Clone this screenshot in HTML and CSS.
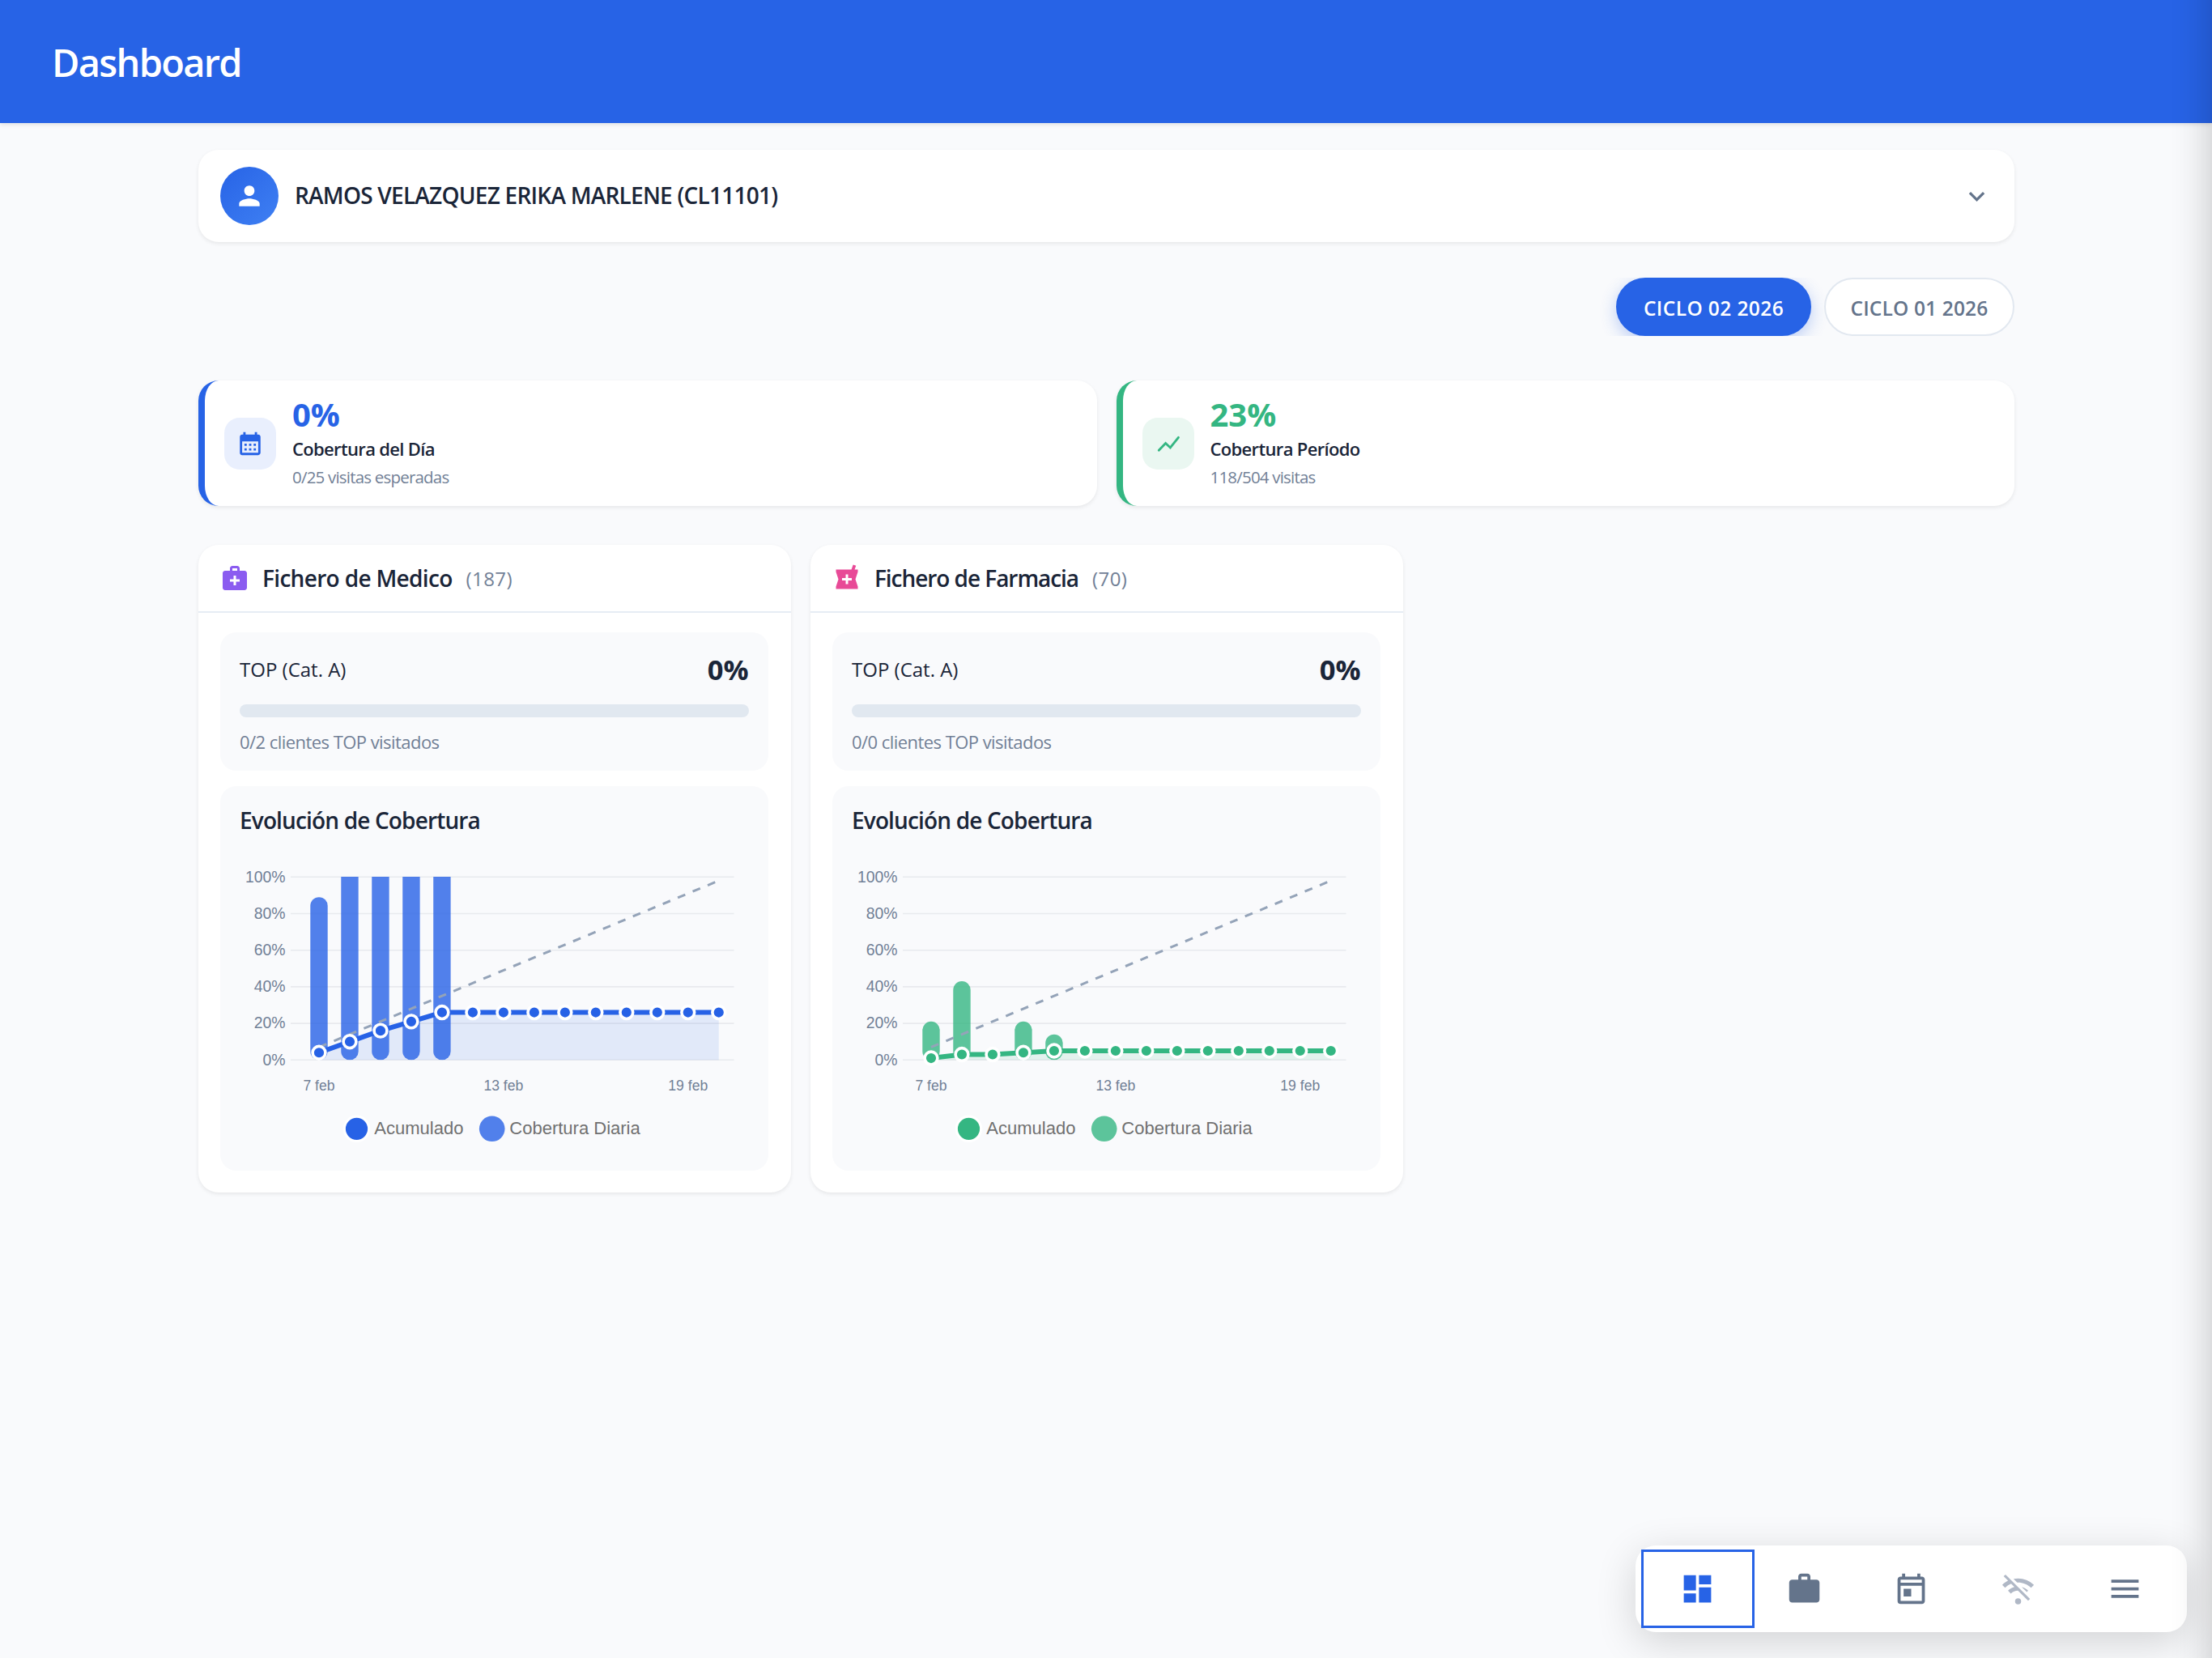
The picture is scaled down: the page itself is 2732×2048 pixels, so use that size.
FILE: index.html
```html
<!DOCTYPE html>
<html lang="es">
<head>
<meta charset="utf-8">
<title>Dashboard</title>
<link rel="stylesheet" href="styles.css">
</head>
<body>
<header class="topbar"><h1 class="topbar-title">Dashboard</h1></header>
<main class="content">
  <section class="profile">
    <div class="avatar"><svg viewBox="0 0 24 24" width="38" height="38" fill="#fff"><path d="M12 12c2.21 0 4-1.79 4-4s-1.79-4-4-4-4 1.79-4 4 1.79 4 4 4zm0 2c-2.67 0-8 1.34-8 4v2h16v-2c0-2.66-5.33-4-8-4z"/></svg></div>
    <span class="profile-name">RAMOS VELAZQUEZ ERIKA MARLENE (CL11101)</span>
    <svg class="chevron" viewBox="0 0 24 24" width="39" height="39"><path d="M16.59 8.59L12 13.17 7.41 8.59 6 10l6 6 6-6z"/></svg>
  </section>
  <nav class="cycles">
    <button class="pill pill-active">CICLO 02 2026</button>
    <button class="pill">CICLO 01 2026</button>
  </nav>
  <section class="stats">
    <article class="stat stat-blue">
      <div class="stat-icon"><svg viewBox="0 0 24 24" width="34" height="34"><path d="M19 4h-1V2h-2v2H8V2H6v2H5c-1.11 0-1.99.9-1.99 2L3 20a2 2 0 0 0 2 2h14c1.1 0 2-.9 2-2V6c0-1.1-.9-2-2-2zm0 16H5V10h14v10zM9 14H7v-2h2v2zm4 0h-2v-2h2v2zm4 0h-2v-2h2v2zm-8 4H7v-2h2v2zm4 0h-2v-2h2v2zm4 0h-2v-2h2v2z"/></svg></div>
      <div class="stat-text">
        <span class="stat-value">0%</span>
        <span class="stat-label">Cobertura del Día</span>
        <span class="stat-sub">0/25 visitas esperadas</span>
      </div>
    </article>
    <article class="stat stat-green">
      <div class="stat-icon"><svg viewBox="0 0 24 24" width="34" height="34"><path class="trend" d="M3.7 17.8L9.6 11.7 13.7 15.5 20.8 6.6"/></svg></div>
      <div class="stat-text">
        <span class="stat-value">23%</span>
        <span class="stat-label">Cobertura Período</span>
        <span class="stat-sub">118/504 visitas</span>
      </div>
    </article>
  </section>
  <section class="files">
    <article class="file file-medico">
      <header class="file-head">
        <svg viewBox="0 0 24 24" width="36" height="36"><path d="M20 6h-4V4c0-1.1-.9-2-2-2h-4c-1.1 0-2 .9-2 2v2H4c-1.1 0-2 .9-2 2v12c0 1.1.9 2 2 2h16c1.1 0 2-.9 2-2V8c0-1.1-.9-2-2-2zM10 4h4v2h-4V4zm6 11h-3v3h-2v-3H8v-2h3v-3h2v3h3v2z"/></svg>
        <h2 class="file-title">Fichero de Medico</h2><span class="file-count">(187)</span>
      </header>
      <div class="file-body">
        <div class="panel top-panel">
          <div class="top-row"><span class="top-label">TOP (Cat. A)</span><strong class="top-value">0%</strong></div>
          <div class="bar"></div>
          <span class="top-sub">0/2 clientes TOP visitados</span>
        </div>
        <div class="panel chart-panel">
          <h3 class="chart-title">Evolución de Cobertura</h3>
          <svg class="chart" id="chart-medico" viewBox="296 1040 628 380" width="628" height="380"></svg>
        </div>
      </div>
    </article>
    <article class="file file-farmacia">
      <header class="file-head">
        <svg viewBox="0 0 24 24" width="36" height="36"><path d="M21 5h-2.64l1.14-3.14L17.15 1l-1.46 4H3v2l2 6-2 6v2h18v-2l-2-6 2-6V5zm-5 9h-3v3h-2v-3H8v-2h3V9h2v3h3v2z"/></svg>
        <h2 class="file-title">Fichero de Farmacia</h2><span class="file-count">(70)</span>
      </header>
      <div class="file-body">
        <div class="panel top-panel">
          <div class="top-row"><span class="top-label">TOP (Cat. A)</span><strong class="top-value">0%</strong></div>
          <div class="bar"></div>
          <span class="top-sub">0/0 clientes TOP visitados</span>
        </div>
        <div class="panel chart-panel">
          <h3 class="chart-title">Evolución de Cobertura</h3>
          <svg class="chart" id="chart-farmacia" viewBox="296 1040 628 380" width="628" height="380"></svg>
        </div>
      </div>
    </article>
  </section>
</main>
<nav class="dock">
  <a class="dock-item dock-active"><svg viewBox="0 0 24 24" width="45" height="45"><path d="M3 13h8V3H3v10zm0 8h8v-6H3v6zm10 0h8V11h-8v10zm0-18v6h8V3h-8z"/></svg></a>
  <a class="dock-item"><svg viewBox="0 0 24 24" width="45" height="45"><path d="M20 6h-4V4c0-1.11-.89-2-2-2h-4c-1.11 0-2 .89-2 2v2H4c-1.11 0-1.99.89-1.99 2L2 19c0 1.11.89 2 2 2h16c1.11 0 2-.89 2-2V8c0-1.11-.89-2-2-2zm-6 0h-4V4h4v2z"/></svg></a>
  <a class="dock-item"><svg viewBox="0 0 24 24" width="45" height="45"><path d="M19 4h-1V2h-2v2H8V2H6v2H5c-1.11 0-1.99.9-1.99 2L3 20a2 2 0 0 0 2 2h14c1.1 0 2-.9 2-2V6c0-1.1-.9-2-2-2zm0 16H5V10h14v10zm0-12H5V6h14v2zM7 12h5v5H7z"/></svg></a>
  <a class="dock-item dock-disabled"><svg viewBox="0 0 24 24" width="45" height="45"><g transform="translate(.6 .9) scale(.95)"><path d="M22.99 9C19.15 5.16 13.8 3.76 8.84 4.78l2.52 2.52c3.47-.17 6.99 1.05 9.63 3.7l2-2zm-4 4c-1.29-1.29-2.84-2.13-4.49-2.56l3.53 3.53.96-.97zM2 3.05L5.07 6.1C3.6 6.82 2.22 7.78 1 9l1.99 2c1.24-1.24 2.67-2.16 4.2-2.77l2.24 2.24C7.81 10.89 6.27 11.73 5 13v.01L6.99 15c1.36-1.36 3.14-2.04 4.92-2.06L18.98 20l1.27-1.26L3.29 1.79 2 3.05z"/></g><circle cx="12" cy="20.2" r="2"/></svg></a>
  <a class="dock-item"><svg viewBox="0 0 24 24" width="45" height="45"><path d="M3 18h18v-2H3v2zm0-5h18v-2H3v2zm0-7v2h18V6H3z"/></svg></a>
</nav>
<div class="drawer"></div>
<script src="charts.js"></script>
</body>
</html>
```
FILE: charts.js
```js
// Combined bar + line charts for daily and cumulative coverage.
const X0 = 394, STEP = 37.98, ZERO = 1309.3, FULL = 226;
const px = (i) => X0 + i * STEP;
const py = (v) => ZERO - (v / 100) * FULL;

function roundedBar(i, value, color) {
  const h = Math.min(value, 110) / 100 * FULL;
  return `<rect x="${px(i) - 10.7}" y="${ZERO - h}" width="21.4" height="${h}" rx="10.6" fill="${color}" fill-opacity=".8"/>`;
}

function draw(id, color, bars, line) {
  let s = `<clipPath id="${id}-area"><rect x="359" y="1083" width="548" height="226.5"/></clipPath>`;
  for (let v = 0; v <= 100; v += 20) {
    s += `<line x1="359" x2="906.5" y1="${py(v)}" y2="${py(v)}" class="grid"/>`;
    s += `<text x="352.5" y="${py(v) + 6.3}" class="tick-y">${v}%</text>`;
  }
  s += `<g clip-path="url(#${id}-area)">` + bars.map((v, i) => (v ? roundedBar(i, v, color) : '')).join('') + '</g>';
  const pts = line.map((v, i) => `${px(i)} ${py(v)}`);
  s += `<path d="M${px(0)} ${ZERO}L${pts.join('L')}L${px(13)} ${ZERO}z" fill="${color}" fill-opacity=".11"/>`;
  s += `<path d="M${px(0)} ${py(7)}L${px(13)} ${py(98)}" class="target"/>`;
  s += `<path d="M${pts.join('L')}" fill="none" stroke="${color}" stroke-width="6"/>`;
  line.forEach((v, i) => { s += `<circle cx="${px(i)}" cy="${py(v)}" r="7.9" fill="${color}" stroke="#fff" stroke-width="3.6"/>`; });
  [[0, '7 feb'], [6, '13 feb'], [12, '19 feb']].forEach(([i, t]) => { s += `<text x="${px(i)}" y="1347.3" class="tick-x">${t}</text>`; });
  s += `<circle cx="440.5" cy="1394.3" r="15.2" fill="${color}" stroke="#fff" stroke-width="3.2"/>`;
  s += `<text x="462.3" y="1400.5" class="legend">Acumulado</text>`;
  s += `<circle cx="607.7" cy="1394.3" r="15.8" fill="${color}" fill-opacity=".8"/>`;
  s += `<text x="629.3" y="1400.5" class="legend">Cobertura Diaria</text>`;
  document.getElementById(id).innerHTML = s;
}

draw('chart-medico', '#2762e6', [89, 130, 130, 130, 130], [4, 10, 16, 21, 26, 26, 26, 26, 26, 26, 26, 26, 26, 26]);
draw('chart-farmacia', '#34b682', [21, 43, 0, 21, 14], [1, 3, 3, 4, 5, 5, 5, 5, 5, 5, 5, 5, 5, 5]);
```
FILE: styles.css
```css
* { box-sizing: border-box; margin: 0; padding: 0; }
body {
  width: 2732px; height: 2048px; overflow: hidden; position: relative;
  background: #f9fafc; color: #1a2538;
  font-family: "Open Sans", "Noto Sans", sans-serif;
}
svg { display: block; flex: none; }

.topbar { height: 152px; padding: 1px 0 0 64px; display: flex; align-items: center; background: #2763e6; color: #fff; box-shadow: 0 2px 5px rgba(0,0,0,.1); }
.topbar-title { font-size: 47px; font-weight: 600; line-height: 64px; letter-spacing: -1.7px; }

.content { width: 2243px; margin: 33px 0 0 245px; }

.profile { height: 114px; padding: 0 27px; display: flex; align-items: center; background: #fff; border-radius: 25px; box-shadow: 0 2px 5px rgba(0,0,0,.08); }
.avatar { width: 72px; height: 72px; border-radius: 50%; display: grid; place-items: center; background: linear-gradient(135deg, #2763e6, #3f80f3); }
.profile-name { margin: -2px 0 0 20px; font-size: 28px; font-weight: 600; line-height: 40px; letter-spacing: -.76px; }
.chevron { margin-left: auto; fill: #64748b; }

.cycles { margin-top: 44px; height: 72px; display: flex; justify-content: flex-end; gap: 16px; overflow: hidden; padding-left: 30px; }
.pill { height: 72px; width: 235px; padding-top: 4px; border: 2px solid #e2e8f0; border-radius: 36px; background: #fff; color: #64748b; font: 600 24.5px/34px "Open Sans", sans-serif; letter-spacing: .15px; }
.pill-active { width: 241px; border-color: #2763e6; background: #2763e6; color: #fff; letter-spacing: .4px; box-shadow: 0 6px 20px rgba(39,99,230,.3); }

.stats { margin-top: 55px; display: grid; grid-template-columns: 1fr 1fr; gap: 24px; }
.stat { height: 155px; padding-left: 24px; display: flex; align-items: center; border-left: 8px solid var(--tone); border-radius: 25px; background: #fff; box-shadow: 0 2px 5px rgba(0,0,0,.08); }
.stat-blue { --tone: #2763e6; --tint: #e9effd; }
.stat-green { --tone: #34b682; --tint: #eaf7f1; }
.stat-icon { width: 64px; height: 64px; border-radius: 19px; display: grid; place-items: center; background: var(--tint); fill: var(--tone); }
.trend { fill: none; stroke: var(--tone); stroke-width: 2; stroke-linecap: round; }
.stat-text { margin-left: 20px; display: flex; flex-direction: column; align-items: flex-start; }
.stat-value { margin-top: -2px; font-size: 40px; font-weight: 700; line-height: 46px; color: var(--tone); }
.stat-label { font-size: 22px; font-weight: 600; line-height: 38px; letter-spacing: -.66px; }
.stat-sub { font-size: 20.5px; line-height: 32px; letter-spacing: -.8px; color: #718096; }

.files { margin-top: 48px; display: grid; grid-template-columns: repeat(2, 731.5px); gap: 24.5px; }
.file { height: 800px; border-radius: 25px; background: #fff; box-shadow: 0 2px 5px rgba(0,0,0,.08); }
.file-head { height: 84px; padding: 0 27px; display: flex; align-items: center; border-bottom: 2px solid #e6ecf4; }
.file-medico .file-head { fill: #8b5cf0; }
.file-farmacia .file-head { fill: #e84a97; }
.file-title { margin-left: 16px; font-size: 28px; font-weight: 600; line-height: 40px; letter-spacing: -.67px; }
.file-farmacia .file-title { letter-spacing: -1.05px; }
.file-count { margin: 2px 0 0 17px; font-size: 24px; line-height: 40px; letter-spacing: .4px; color: #718096; }
.file-body { padding: 24px 28px 0 27px; display: grid; gap: 19px; }
.panel { border-radius: 20px; background: #f9fafc; padding: 0 24px; }
.top-panel { height: 171px; padding-top: 20px; }
.top-row { display: flex; justify-content: space-between; align-items: center; height: 50px; }
.top-label { font-size: 24px; font-weight: 500; }
.top-value { font-size: 34.5px; font-weight: 700; }
.bar { height: 16px; margin-top: 19px; border-radius: 8px; background: #e1e8f0; }
.top-sub { display: block; margin-top: 14px; font-size: 22px; line-height: 32px; letter-spacing: -.55px; color: #718096; }
.chart-panel { height: 475px; padding-top: 22px; }
.chart-title { font-size: 28px; font-weight: 600; line-height: 40px; letter-spacing: -.85px; }
.chart { margin-top: 7px; font-family: "Liberation Sans", Arial, sans-serif; }
.grid { stroke: #e8eaee; stroke-width: 1.6; }
.tick-y { font-size: 19.4px; text-anchor: end; fill: #718096; }
.tick-x { font-size: 17.6px; text-anchor: middle; fill: #718096; }
.legend { font-size: 22px; fill: #707070; }
.target { fill: none; stroke: #94a3b8; stroke-width: 3; stroke-dasharray: 10 10; }

.dock { position: absolute; left: 2020px; top: 1909px; width: 681px; height: 107px; padding: 9px 10.5px 9px 11px; display: flex; border-radius: 25px; background: #fff; box-shadow: 0 12px 50px rgba(0,0,0,.16); }
.dock-item { flex: 1; display: grid; place-items: center; fill: #64748b; }
.dock-active { fill: #2763e6; outline: 3px solid #2763e6; outline-offset: 1px; }
.dock-disabled { fill: #b0b8c6; }
.drawer { position: absolute; left: 2732px; top: -80px; width: 100px; height: 2208px; box-shadow: 0 0 50px rgba(0,0,0,.23); }
```
